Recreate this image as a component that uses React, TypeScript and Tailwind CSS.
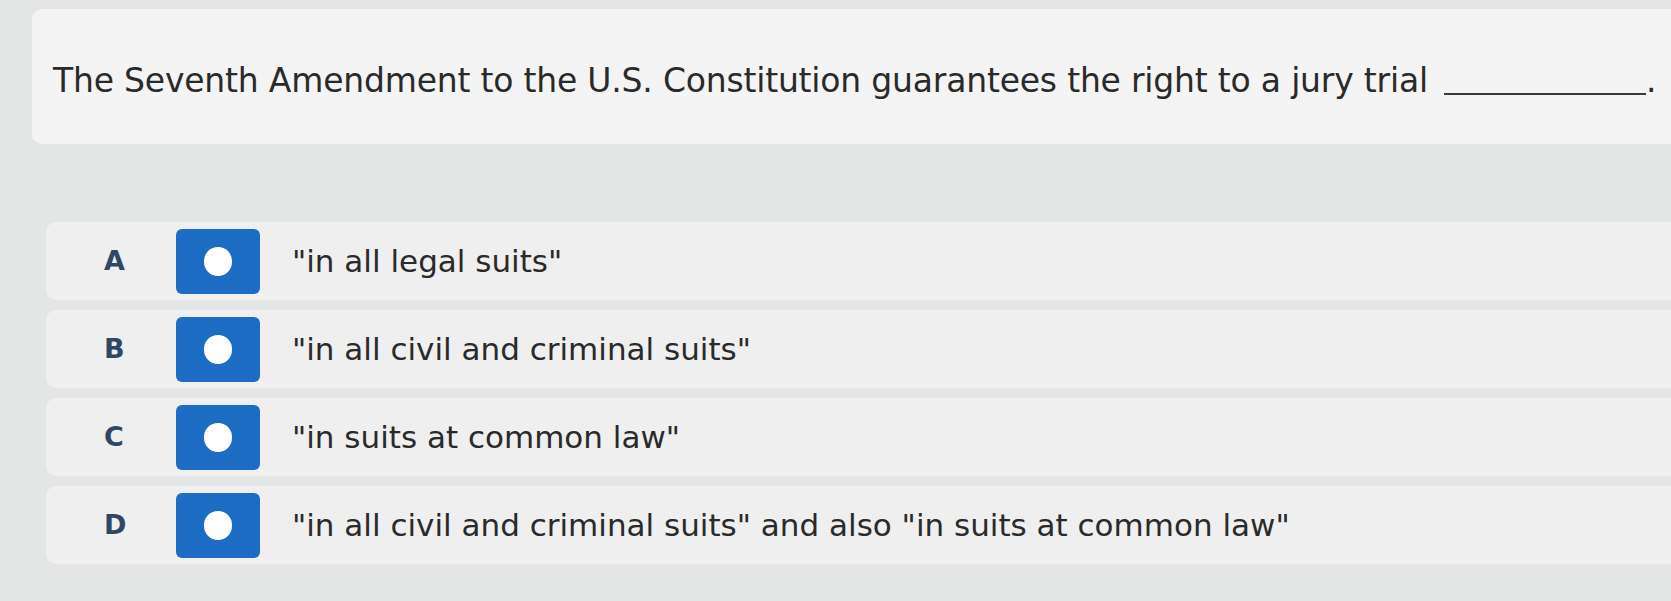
import React from "react";

const options = [
  { letter: "A", text: "\"in all legal suits\"" },
  { letter: "B", text: "\"in all civil and criminal suits\"" },
  { letter: "C", text: "\"in suits at common law\"" },
  { letter: "D", text: "\"in all civil and criminal suits\" and also \"in suits at common law\"" },
];

export default function App() {
  return (
    <div
      className="w-[1671px] h-[601px] overflow-hidden bg-[#e4e5e5] pl-[32px] pt-[9px]"
      style={{ fontFamily: '"DejaVu Sans", Verdana, sans-serif' }}
    >
      <div className="h-[135px] rounded-l-[10px] bg-[#f4f4f4] flex items-center pl-[21px] pt-[8px]">
        <span className="text-[33px] text-[#2a2a2a] tracking-[-0.2px]">
          The Seventh Amendment to the U.S. Constitution guarantees the right to a jury trial
        </span>
        <span className="ml-[16px] mt-[26px] w-[202px] border-b-[2px] border-[#3a3a3a]"></span>
        <span className="text-[33px] text-[#2a2a2a]">.</span>
      </div>
      <div className="mt-[78px] ml-[14px] flex flex-col gap-[10px]">
        {options.map((o) => (
          <div
            key={o.letter}
            className="h-[78px] rounded-l-[10px] bg-[#efefef] flex items-center"
          >
            <div className="w-[130px] pl-[58px] text-[27px] font-bold text-[#2f4763]">
              {o.letter}
            </div>
            <div className="w-[84px] h-[65px] rounded-[6px] bg-[#1b6cc2] flex items-center justify-center">
              <div className="w-[28px] h-[29px] rounded-full bg-white"></div>
            </div>
            <div className="ml-[32px] text-[31px] text-[#2a2a2a]">{o.text}</div>
          </div>
        ))}
      </div>
    </div>
  );
}
